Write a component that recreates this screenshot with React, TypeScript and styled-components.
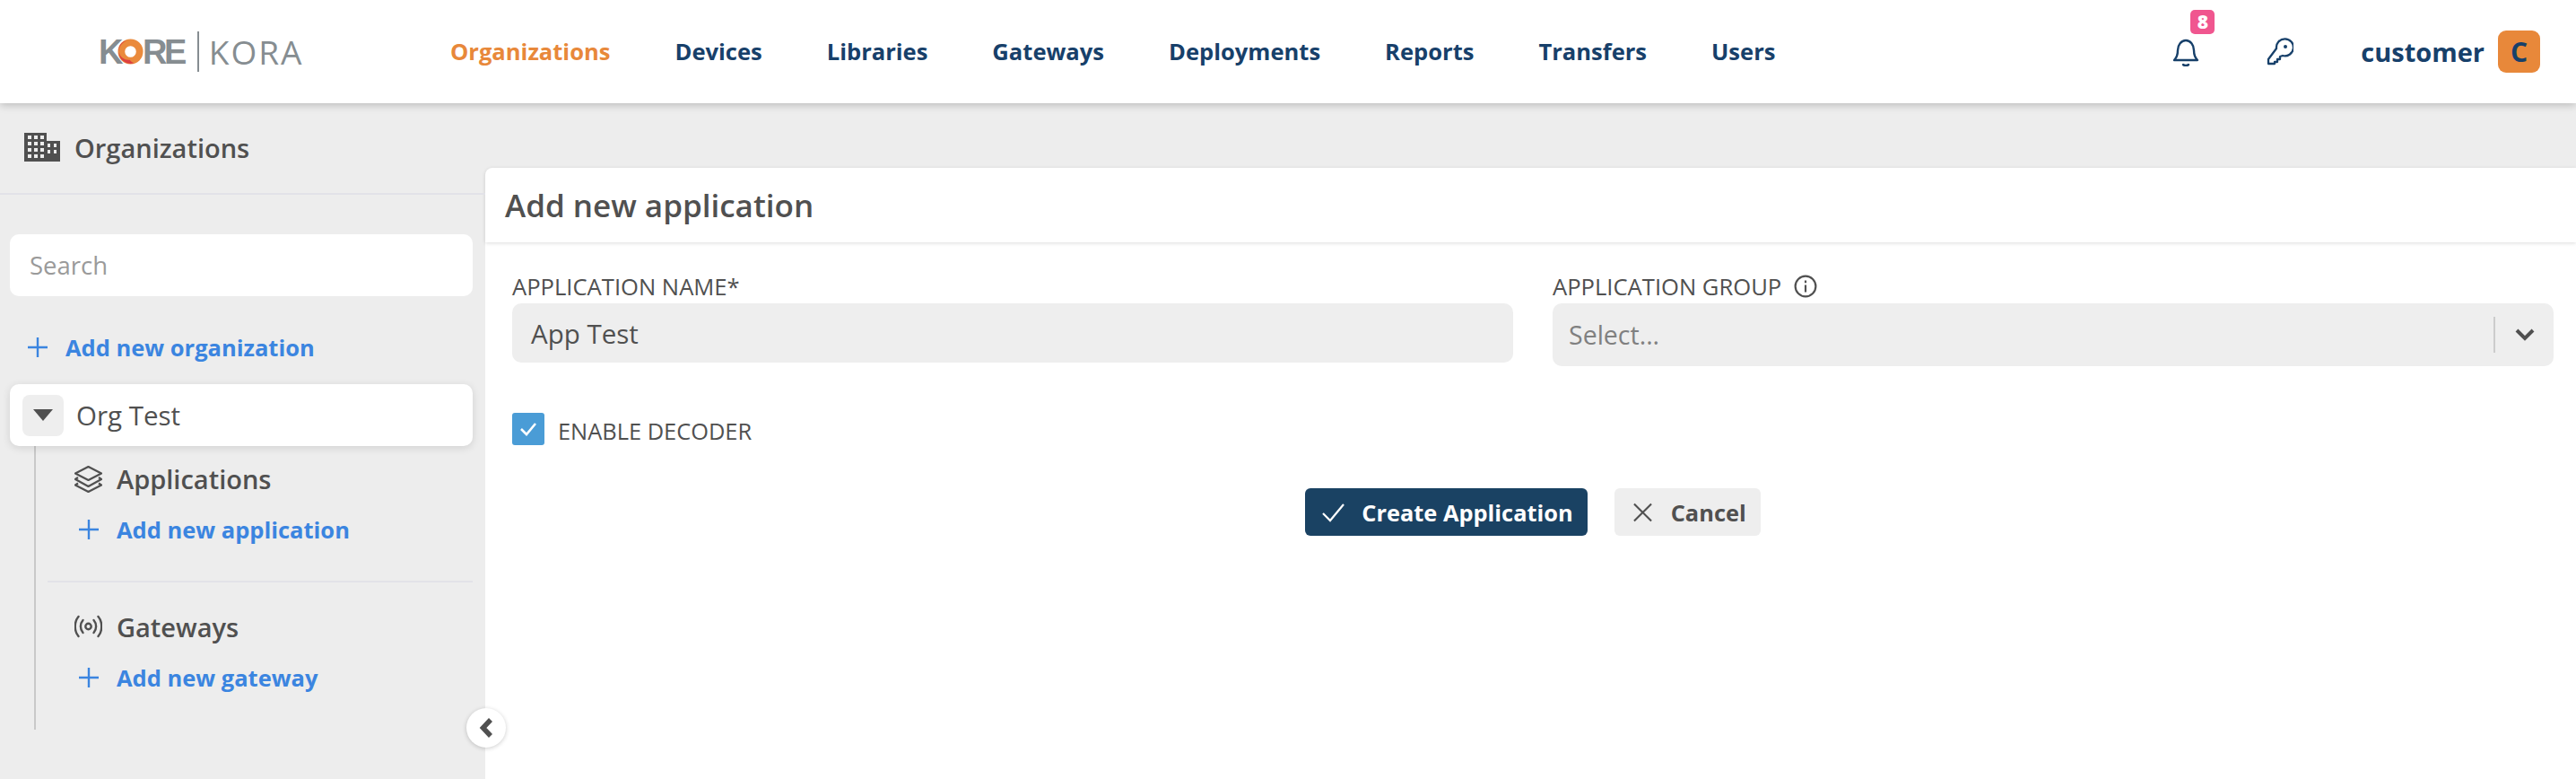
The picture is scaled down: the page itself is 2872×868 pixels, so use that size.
import React from "react";
import styled, { createGlobalStyle } from "styled-components";

const Global = createGlobalStyle`
  html, body { margin: 0; padding: 0; background: #ededed; }
  * { box-sizing: border-box; }
  body { font-family: "Open Sans", "Noto Sans", sans-serif; color: #505050; }
`;
const Page = styled.div`display:flex;flex-direction:column;width:2872px;height:868px;overflow:hidden;background:#ededed;`;
const Header = styled.header`
  position:relative;z-index:2;display:flex;align-items:center;height:115px;flex:none;background:#fff;
  box-shadow:0 2px 9px rgba(0,0,0,.22);padding-left:110px;
`;
const Logo = styled.div`display:flex;align-items:center;width:392px;flex:none;color:#868d91;`;
const LogoBold = styled.span`font-family:"Liberation Sans",sans-serif;font-weight:700;font-size:38px;letter-spacing:-3.5px;line-height:1;`;
const LogoRing = styled.svg`width:29px;height:29px;margin:0 -1px 0 -3px;flex:none;`;
const LogoRule = styled.span`width:2px;height:45px;background:#868d91;margin:0 11px 0 15px;flex:none;`;
const LogoLight = styled.span`font-family:"Open Sans",sans-serif;font-weight:400;font-size:37px;letter-spacing:2px;line-height:1;`;
const Nav = styled.nav`display:flex;gap:72px;margin-top:-1px;`;
const NavLink = styled.a<{ $active?: boolean }>`
  font-weight:700;font-size:25.55px;line-height:34px;color:${p => (p.$active ? "#e8883a" : "#17406a")};
`;
const Tools = styled.div`display:flex;align-items:center;margin-left:auto;padding-right:40px;color:#17406a;`;
const BellWrap = styled.div`position:relative;width:28px;height:32px;margin-right:77px;`;
const Badge = styled.span`
  position:absolute;left:20px;top:-31px;width:27px;height:27px;border-radius:5px;background:#f0568f;color:#fff;
  font-weight:800;font-size:21px;line-height:27px;text-align:center;
`;
const ToolIcon = styled.svg`display:block;width:30px;height:32px;`;
const UserName = styled.span`font-weight:700;font-size:29px;line-height:40px;margin-left:75px;margin-right:15px;`;
const Avatar = styled.span`
  width:47px;height:47px;border-radius:9px;background:#e8883a;color:#17406a;font-weight:700;font-size:30px;
  line-height:47px;text-align:center;
`;
const Main = styled.div`display:flex;flex:1;min-height:0;`;
const Sidebar = styled.aside`width:541px;flex:none;position:relative;`;
const SideTitle = styled.div`
  display:flex;align-items:center;height:102px;padding:0 0 2px 27px;border-bottom:2px solid #e2e2e8;
  font-weight:600;font-size:29px;color:#505050;gap:16px;
`;
const SearchBox = styled.div`
  margin:44px 14px 0 11px;height:69px;border-radius:10px;background:#fff;padding-left:22px;
  font-size:27.500px;line-height:69px;color:#9a9a9a;
`;
const AddRow = styled.a<{ $top: number; $left: number }>`
  display:flex;align-items:center;height:40px;margin-top:${p => p.$top}px;padding-left:${p => p.$left}px;
  color:#3b85e0;font-weight:700;font-size:25.5px;gap:20px;
`;
const Plus = styled.svg`width:22px;height:22px;flex:none;`;
const OrgCard = styled.div`
  position:relative;z-index:1;display:flex;align-items:center;margin:21px 14px 0 11px;height:69px;border-radius:10px;
  background:#fff;padding-left:14px;box-shadow:0 2px 10px rgba(0,0,0,.12);font-size:29.5px;color:#505050;gap:14px;
`;
const Toggle = styled.span`
  display:flex;align-items:center;justify-content:center;width:46px;height:46px;border-radius:8px;background:#eeeeee;
`;
const Caret = styled.svg`width:22px;height:13px;`;
const Tree = styled.div`margin-left:38px;border-left:2px solid #c9c9c9;padding-top:16px;padding-bottom:38px;`;
const SectionRow = styled.div<{ $top?: number }>`
  display:flex;align-items:center;height:40px;margin-top:${p => p.$top ?? 0}px;padding-left:43px;
  font-weight:600;font-size:29px;color:#505050;gap:16px;
`;
const SectionIcon = styled.svg`width:31px;height:31px;flex:none;`;
const TreeRule = styled.div`height:2px;background:#e2e2e8;margin:37px 14px 0 13px;`;
const Collapse = styled.button`
  position:absolute;z-index:3;left:520px;top:674px;width:44px;height:44px;border:0;border-radius:50%;background:#fff;
  box-shadow:0 1px 5px rgba(0,0,0,.2);padding:0;display:flex;align-items:center;justify-content:center;
`;
const Panel = styled.section`flex:1;margin-top:72px;background:#fff;border-top-left-radius:8px;display:flex;flex-direction:column;`;
const PanelHead = styled.div`
  height:83px;flex:none;padding-left:22px;font-weight:600;font-size:35px;line-height:84px;color:#505050;
  box-shadow:0 1px 4px rgba(0,0,0,.14);border-top-left-radius:8px;
`;
const Form = styled.div`padding:33px 25px 0 30px;`;
const FieldGrid = styled.div`display:grid;grid-template-columns:1116px 1116px;column-gap:44px;align-items:start;`;
const Field = styled.div`display:flex;flex-direction:column;`;
const Label = styled.label`display:flex;align-items:center;gap:14px;height:32px;margin-bottom:3px;font-size:25.6px;color:#505050;`;
const Input = styled.div`
  height:66px;border-radius:10px;background:#eeeeee;padding-left:21px;font-size:29.5px;line-height:67px;color:#505050;
`;
const Select = styled.div`
  display:flex;align-items:center;height:70px;border-radius:10px;background:#eeeeee;padding-left:18px;
  font-size:28.5px;color:#808080;
`;
const SelectText = styled.span`flex:1;`;
const SelectRule = styled.span`width:2px;height:40px;background:#cccccc;`;
const SelectArrow = styled.span`display:flex;justify-content:center;width:65px;`;
const CheckRow = styled.div`display:flex;align-items:center;gap:15px;margin-top:52px;height:36px;font-size:25.4px;color:#505050;`;
const CheckBox = styled.span`
  display:flex;align-items:center;justify-content:center;width:36px;height:36px;border-radius:3px;background:#4a9cd6;
`;
const CheckText = styled.span`padding-top:3px;`;
const Actions = styled.div`display:flex;justify-content:center;gap:30px;margin-top:48px;`;
const Btn = styled.button<{ $primary?: boolean }>`
  display:flex;align-items:center;height:53px;border:0;border-radius:6px;font-family:inherit;font-weight:700;font-size:25.4px;
  gap:${p => (p.$primary ? 19 : 21)}px;padding:0 ${p => (p.$primary ? "16px 0 19px" : "16px 0 21px")};
  background:${p => (p.$primary ? "#1a4263" : "#eeeeee")};color:${p => (p.$primary ? "#fff" : "#505050")};
`;
const BtnIcon = styled.svg`width:25px;height:22px;flex:none;`;

const PlusIcon = () => (
  <Plus viewBox="0 0 22 22"><path d="M11 0v22M0 11h22" stroke="currentColor" strokeWidth="2.4" /></Plus>
);

export default function App() {
  return (
    <Page>
      <Global />
      <Header>
        <Logo>
          <LogoBold>K</LogoBold>
          <LogoRing viewBox="0 0 30 30">
            <circle cx="15" cy="15" r="10.5" fill="none" stroke="#ea8a3c" strokeWidth="8" />
            <path d="M11 2.2A13.5 13.5 0 0 0 19 28.2 13 13 0 0 1 14 24.5 11 11 0 0 1 11 2.2Z" fill="#dd4040" />
          </LogoRing>
          <LogoBold>RE</LogoBold>
          <LogoRule />
          <LogoLight>KORA</LogoLight>
        </Logo>
        <Nav>
          <NavLink $active>Organizations</NavLink>
          <NavLink>Devices</NavLink>
          <NavLink>Libraries</NavLink>
          <NavLink>Gateways</NavLink>
          <NavLink>Deployments</NavLink>
          <NavLink>Reports</NavLink>
          <NavLink>Transfers</NavLink>
          <NavLink>Users</NavLink>
        </Nav>
        <Tools>
          <BellWrap>
            <ToolIcon viewBox="0 0 30 32" fill="none" stroke="currentColor" strokeWidth="2.4" strokeLinecap="round" strokeLinejoin="round">
              <path d="M2 25c3-3 4-6 4-11 0-6 4-11 9-11s9 5 9 11c0 5 1 8 4 11Z" />
              <path d="M12 30c1.5 1.4 4.500 1.400 6 0" />
            </ToolIcon>
            <Badge>8</Badge>
          </BellWrap>
          <ToolIcon viewBox="0 0 30 32" fill="none" stroke="currentColor" strokeWidth="2.3" strokeLinejoin="round">
            <path d="M11 13a9.500 9.500 0 1 1 7 8l-3 1v3h-3v3H9v2H2v-5Z" transform="translate(0 -1)" />
            <circle cx="21" cy="10" r="2" fill="currentColor" stroke="none" />
          </ToolIcon>
          <UserName>customer</UserName>
          <Avatar>C</Avatar>
        </Tools>
      </Header>
      <Main>
        <Sidebar>
          <SideTitle>
            <svg width="40" height="32" viewBox="0 0 40 32" fill="#505050">
              <path fillRule="evenodd" d="M0 0h25v9h15v23H0ZM4 3v4h4V3Zm7 0v4h4V3Zm7 0v4h4V3ZM4 10v4h4v-4Zm7 0v4h4v-4Zm7 0v4h4v-4Zm8 2v4h3v-4Zm7 0v4h3v-4ZM4 17v4h4v-4Zm7 0v4h4v-4Zm7 0v4h4v-4Zm8 2v4h3v-4Zm7 0v4h3v-4ZM4 24v4h4v-4Zm7 0v4h4v-4Zm7 0v4h4v-4Z" />
            </svg>
            Organizations
          </SideTitle>
          <SearchBox>Search</SearchBox>
          <AddRow $top={37} $left={31}><PlusIcon />Add new organization</AddRow>
          <OrgCard>
            <Toggle>
              <Caret viewBox="0 0 22 13"><path d="M0 0h22L11 13Z" fill="#505050" /></Caret>
            </Toggle>
            Org Test
          </OrgCard>
          <Tree>
            <SectionRow>
              <SectionIcon viewBox="0 0 31 31" fill="none" stroke="#505050" strokeWidth="2.2" strokeLinejoin="round">
                <path d="M15.500 2 30 9.500 15.500 17 1 9.500Z" />
                <path d="M4 14 1 16 15.500 24 30 16 27 14" />
                <path d="M4 20.500 1 22.500 15.500 30 30 22.500 27 20.500" />
              </SectionIcon>
              Applications
            </SectionRow>
            <AddRow $top={17} $left={48}><PlusIcon />Add new application</AddRow>
            <TreeRule />
            <SectionRow $top={29}>
              <SectionIcon viewBox="0 0 31 31" fill="none" stroke="#505050" strokeWidth="2.4" strokeLinecap="round">
                <circle cx="15.500" cy="15" r="3.200" />
                <path d="M9.500 8c-3.500 4-3.500 10 0 14M21.500 8c3.500 4 3.500 10 0 14" />
                <path d="M4.500 4c-5 6-5 16 0 22M26.500 4c5 6 5 16 0 22" />
              </SectionIcon>
              Gateways
            </SectionRow>
            <AddRow $top={17} $left={48}><PlusIcon />Add new gateway</AddRow>
          </Tree>
          <Collapse aria-label="Collapse">
            <svg width="18" height="24" viewBox="0 0 18 24"><path d="M14 3 5.500 12l8.500 9" fill="none" stroke="#505050" strokeWidth="5.500" /></svg>
          </Collapse>
        </Sidebar>
        <Panel>
          <PanelHead>Add new application</PanelHead>
          <Form>
            <FieldGrid>
              <Field>
                <Label>APPLICATION NAME*</Label>
                <Input>App Test</Input>
              </Field>
              <Field>
                <Label>
                  APPLICATION GROUP
                  <svg width="26" height="26" viewBox="0 0 24 24" fill="none" stroke="#505050" strokeWidth="2">
                    <circle cx="12" cy="12" r="10.500" />
                    <path d="M12 10.500V18M12 6v2.500" />
                  </svg>
                </Label>
                <Select>
                  <SelectText>Select...</SelectText>
                  <SelectRule />
                  <SelectArrow>
                    <svg width="22" height="14" viewBox="0 0 22 14"><path d="M2 2l9 9 9-9" fill="none" stroke="#505050" strokeWidth="4" /></svg>
                  </SelectArrow>
                </Select>
              </Field>
            </FieldGrid>
            <CheckRow>
              <CheckBox>
                <svg width="20" height="16" viewBox="0 0 20 16"><path d="M2 8l6 6L18 2" fill="none" stroke="#fff" strokeWidth="2.600" /></svg>
              </CheckBox>
              <CheckText>ENABLE DECODER</CheckText>
            </CheckRow>
            <Actions>
              <Btn $primary>
                <BtnIcon viewBox="0 0 25 22"><path d="M1 12l8 8L24 2" fill="none" stroke="#fff" strokeWidth="2.200" /></BtnIcon>
                Create Application
              </Btn>
              <Btn>
                <BtnIcon viewBox="0 0 22 22" style={{ width: 21 }}><path d="M1 1l20 20M21 1 1 21" fill="none" stroke="#505050" strokeWidth="2.200" /></BtnIcon>
                Cancel
              </Btn>
            </Actions>
          </Form>
        </Panel>
      </Main>
    </Page>
  );
}
